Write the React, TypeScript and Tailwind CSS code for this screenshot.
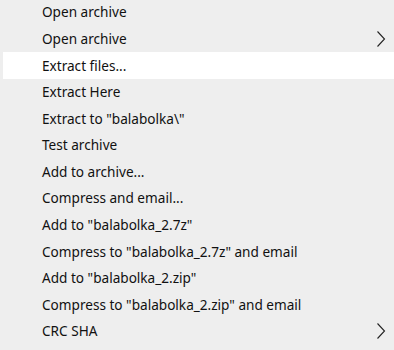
import React from "react";

const items: { label: string; sub?: boolean; active?: boolean }[] = [
  { label: "Open archive" },
  { label: "Open archive", sub: true },
  { label: "Extract files...", active: true },
  { label: "Extract Here" },
  { label: 'Extract to "balabolka\\"' },
  { label: "Test archive" },
  { label: "Add to archive..." },
  { label: "Compress and email..." },
  { label: 'Add to "balabolka_2.7z"' },
  { label: 'Compress to "balabolka_2.7z" and email' },
  { label: 'Add to "balabolka_2.zip"' },
  { label: 'Compress to "balabolka_2.zip" and email' },
  { label: "CRC SHA", sub: true },
];

function Chevron() {
  return (
    <svg width="10" height="18" viewBox="0 0 10 18" className="block">
      <polyline points="1.5,1.5 8.5,9 1.5,16.5" fill="none" stroke="#222" strokeWidth="1.1" />
    </svg>
  );
}

export default function App() {
  return (
    <div
      className="w-[394px] h-[350px] bg-[#eeeeee] overflow-hidden text-[13.6px] text-[#111]"
      style={{ fontFamily: '"Noto Sans", "Open Sans", sans-serif' }}
    >
      <div className="-mt-[1.2px] flex flex-col">
        {items.map((it, i) => (
          <div
            key={i}
            className={`h-[26.6px] ml-[3px] pl-[39px] pr-[8px] flex items-center justify-between ${
              it.active ? "bg-white" : ""
            }`}
          >
            <span className="leading-none">{it.label}</span>
            {it.sub ? <Chevron /> : null}
          </div>
        ))}
      </div>
    </div>
  );
}
